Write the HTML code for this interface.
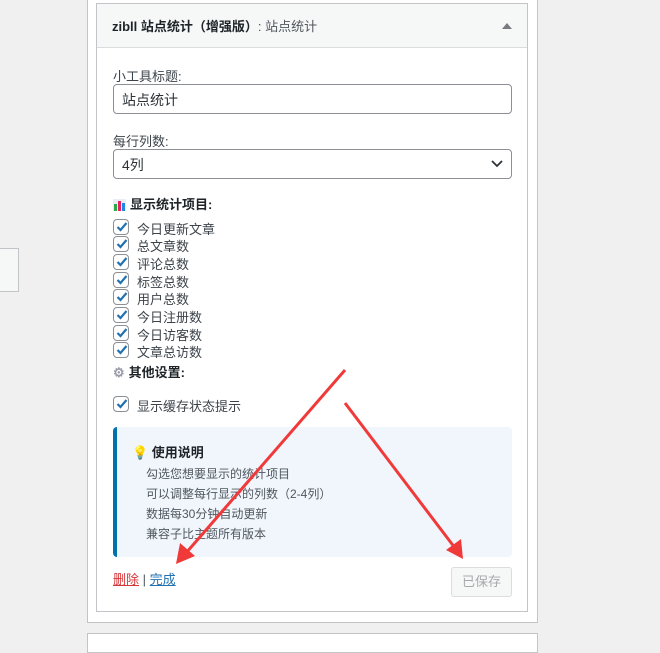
<!DOCTYPE html>
<html><head><meta charset="utf-8"><style>
*{box-sizing:border-box;margin:0;padding:0}
body{width:660px;height:643px;background:#f0f0f1;font-family:"Liberation Sans","Noto Sans CJK SC",sans-serif;font-size:13px;color:#2c3338;position:relative;overflow:hidden}
.lbox{position:absolute;left:-1px;top:248px;width:20px;height:44px;background:#f6f7f7;border:1px solid #c3c4c7}
.outer{position:absolute;left:87px;top:-2px;width:451px;height:625px;background:#fff;border:1px solid #c3c4c7}
.outer2{position:absolute;left:87px;top:633px;width:451px;height:20px;background:#fff;border:1px solid #c3c4c7}
.w{position:absolute;left:96px;top:3px;width:432px;height:609px;border:1px solid #c3c4c7;background:#fff}
.hd{height:44px;background:#f6f7f7;border-bottom:1px solid #dcdcde;padding:12px 15px;font-size:13px;font-weight:bold;color:#1d2327}
.hd span{font-weight:normal;color:#50575e}
.hd .tri{position:absolute;right:15px;top:19px;width:0;height:0;border-left:5px solid transparent;border-right:5px solid transparent;border-bottom:6px solid #787c82}
.a{position:absolute;left:16px}
.inp{position:absolute;left:16px;width:399px;height:30px;border:1px solid #8c8f94;border-radius:4px;padding:5px 8px;font-size:14px;color:#2c3338}
.cb{position:absolute;left:16px;width:16px;height:16px;border:1px solid #8c8f94;border-radius:4px;background:#fff}
.cb svg{position:absolute;left:1px;top:0}
.cl{position:absolute;left:40px;font-size:13px;color:#3c434a}
.note{position:absolute;left:16px;top:423px;width:399px;height:130px;background:#f0f6fc;border-left:4px solid #0073aa;border-radius:4px}
.note p{position:absolute;left:29px;font-size:12px;color:#50575e}
</style></head><body>
<div class="lbox"></div>
<div class="outer"></div>
<div class="outer2"></div>
<div class="w">
<div class="hd">zibll 站点统计（增强版）<span>: 站点统计</span><i class="tri"></i></div>
<div class="a" style="top:62px;color:#3c434a">小工具标题:</div>
<div class="inp" style="top:80px">站点统计</div>
<div class="a" style="top:127px;color:#3c434a">每行列数:</div>
<div class="inp" style="top:145px">4列<svg style="position:absolute;right:8px;top:10px" width="12" height="8"><path d="M1 1l5 5 5-5" stroke="#2c3338" stroke-width="1.8" fill="none"/></svg></div>
<div class="a" style="top:190px;font-weight:bold;color:#1d2327"><svg width="13" height="13" style="vertical-align:-2px;margin-right:4px"><rect x="0" y="1" width="13" height="12" fill="#e8eef3"/><rect x="1" y="6" width="3" height="7" fill="#2aa84a"/><rect x="5" y="3" width="3" height="10" fill="#e91e63"/><rect x="9" y="5" width="3" height="8" fill="#1e88e5"/></svg>显示统计项目:</div>
<div class="cb" style="top:215px"><svg width="14" height="14"><path d="M2.5 7l3 3 6-7" stroke="#2271b1" stroke-width="2.2" fill="none"/></svg></div><div class="cl" style="top:215px">今日更新文章</div>
<div class="cb" style="top:232px"><svg width="14" height="14"><path d="M2.5 7l3 3 6-7" stroke="#2271b1" stroke-width="2.2" fill="none"/></svg></div><div class="cl" style="top:232px">总文章数</div>
<div class="cb" style="top:250px"><svg width="14" height="14"><path d="M2.5 7l3 3 6-7" stroke="#2271b1" stroke-width="2.2" fill="none"/></svg></div><div class="cl" style="top:250px">评论总数</div>
<div class="cb" style="top:268px"><svg width="14" height="14"><path d="M2.5 7l3 3 6-7" stroke="#2271b1" stroke-width="2.2" fill="none"/></svg></div><div class="cl" style="top:268px">标签总数</div>
<div class="cb" style="top:285px"><svg width="14" height="14"><path d="M2.5 7l3 3 6-7" stroke="#2271b1" stroke-width="2.2" fill="none"/></svg></div><div class="cl" style="top:285px">用户总数</div>
<div class="cb" style="top:303px"><svg width="14" height="14"><path d="M2.5 7l3 3 6-7" stroke="#2271b1" stroke-width="2.2" fill="none"/></svg></div><div class="cl" style="top:303px">今日注册数</div>
<div class="cb" style="top:321px"><svg width="14" height="14"><path d="M2.5 7l3 3 6-7" stroke="#2271b1" stroke-width="2.2" fill="none"/></svg></div><div class="cl" style="top:321px">今日访客数</div>
<div class="cb" style="top:338px"><svg width="14" height="14"><path d="M2.5 7l3 3 6-7" stroke="#2271b1" stroke-width="2.2" fill="none"/></svg></div><div class="cl" style="top:338px">文章总访数</div>
<div class="a" style="top:358px;font-weight:bold;color:#1d2327"><span style="color:#9a9aa8;margin-right:4px">⚙</span>其他设置:</div>
<div class="cb" style="top:392px"><svg width="14" height="14"><path d="M2.5 7l3 3 6-7" stroke="#2271b1" stroke-width="2.2" fill="none"/></svg></div><div class="cl" style="top:392px">显示缓存状态提示</div>
<div class="note">
<p style="top:15px;left:15px;font-size:13px;font-weight:bold;color:#1d2327"><span style="color:#f5b800">💡</span> 使用说明</p>
<p style="top:38px">勾选您想要显示的统计项目</p>
<p style="top:58px">可以调整每行显示的列数（2-4列）</p>
<p style="top:78px">数据每30分钟自动更新</p>
<p style="top:98px">兼容子比主题所有版本</p>
</div>
<div class="a" style="top:565px;font-size:13px"><span style="color:#d63638;text-decoration:underline">删除</span> <span style="color:#50575e">|</span> <span style="color:#2271b1;text-decoration:underline">完成</span></div>
<div style="position:absolute;left:354px;top:563px;width:61px;height:30px;border:1px solid #dcdcde;border-radius:3px;background:#f6f7f7;color:#a7aaad;font-size:13px;text-align:center;line-height:28px">已保存</div>
</div>
<svg style="position:absolute;left:0;top:0" width="660" height="643">
<line x1="345" y1="370" x2="186" y2="553" stroke="#f03a3a" stroke-width="3"/>
<polygon points="176,564 180,543 195,556" fill="#f03a3a"/>
<line x1="345" y1="403" x2="455" y2="548" stroke="#f03a3a" stroke-width="3"/>
<polygon points="463,559 446,550 461,539" fill="#f03a3a"/>
</svg>
</body></html>
